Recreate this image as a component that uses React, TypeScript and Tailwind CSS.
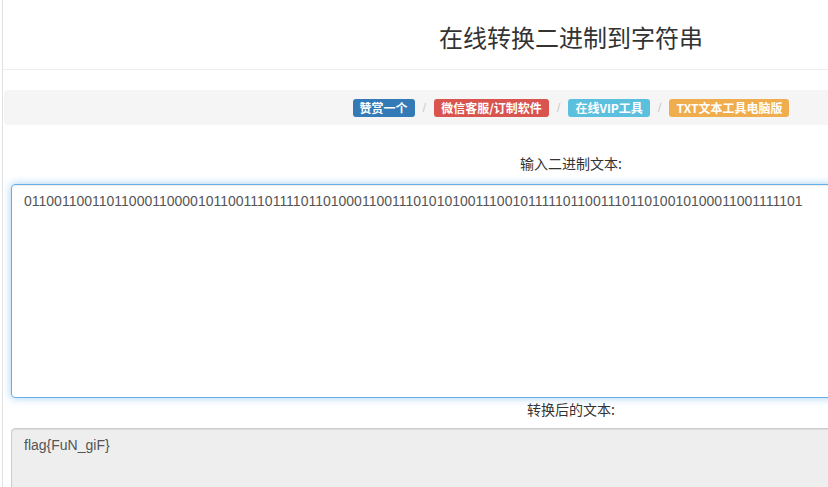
import * as React from 'react'

const cjk = "font-['Microsoft_YaHei','Noto_Sans_CJK_SC',sans-serif]"

const links = [
  { text: '赞赏一个', cls: 'bg-[#337ab7]' },
  { text: '微信客服/订制软件', cls: 'bg-[#d9534f]' },
  { text: '在线VIP工具', cls: 'bg-[#5bc0de]' },
  { text: 'TXT文本工具电脑版', cls: 'bg-[#f0ad4e]' },
]

const binary =
  '01100110011011000110000101100111011110110100011001110101010011100101111101100111011010010100011001111101'

export default function App() {
  return (
    <div className="w-[828px] h-[487px] overflow-hidden bg-white">
      <div className="w-[1137px] h-[487px] ml-[2px] border-l border-[#e2e2e2]">
        {/* header */}
        <div className="h-[70px] border-b border-[#eeeeee] flex items-center justify-center pt-[4px]">
          <h1 className={`${cjk} text-[24px] text-[#333] font-normal`}>在线转换二进制到字符串</h1>
        </div>

        {/* breadcrumb */}
        <div className="mt-[20px] mx-px h-[35px] bg-[#f5f5f5] rounded-[4px] flex items-center justify-center">
          {links.map((l, i) => (
            <React.Fragment key={l.text}>
              {i > 0 && <span className="px-[8px] text-[13px] text-[#ccc] font-['Liberation_Sans',sans-serif]">/</span>}
              <span
                className={`${l.cls} ${cjk} inline-block h-[18px] leading-[18px] px-[7px] rounded-[3px] text-[12px] font-bold text-white`}
              >
                {l.text}
              </span>
            </React.Fragment>
          ))}
        </div>

        {/* input */}
        <div className={`${cjk} mt-[28px] h-[20px] leading-[20px] text-center text-[14px] text-[#333]`}>
          输入二进制文本:
        </div>
        <textarea
          readOnly
          defaultValue={binary}
          className="block mt-[11px] ml-[8px] w-[1120px] h-[214px] resize-none rounded-[4px] border border-[#66afe9] px-[12px] py-[6px] leading-[20px] text-[14px] text-[#555] font-['Liberation_Sans',sans-serif] outline-none shadow-[inset_0_1px_1px_rgba(0,0,0,0.075),0_0_8px_rgba(102,175,233,0.6)]"
        />

        {/* output */}
        <div className={`${cjk} mt-[1px] h-[20px] leading-[20px] text-center text-[14px] text-[#333]`}>
          转换后的文本:
        </div>
        <textarea
          readOnly
          defaultValue="flag{FuN_giF}"
          className="block mt-[9px] ml-[8px] w-[1120px] h-[214px] resize-none rounded-[4px] border border-[#ccc] bg-[#eeeeee] px-[12px] py-[6px] leading-[20px] text-[14px] text-[#555] font-['Liberation_Sans',sans-serif] outline-none shadow-[inset_0_1px_1px_rgba(0,0,0,0.075)]"
        />
      </div>
    </div>
  )
}
